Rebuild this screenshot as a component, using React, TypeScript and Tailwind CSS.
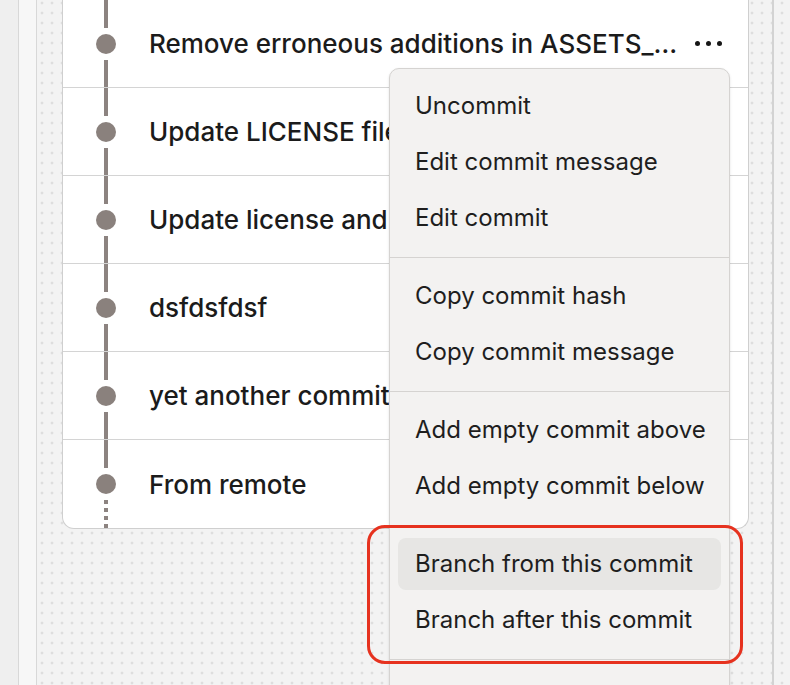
import React from 'react';

const commits = [
  'Remove erroneous additions in ASSETS_…',
  'Update LICENSE file',
  'Update license and readme',
  'dsfdsfdsf',
  'yet another commit',
  'From remote',
];

type MenuEntry = { label: string; active?: boolean } | 'sep';

const menu: MenuEntry[] = [
  { label: 'Uncommit' },
  { label: 'Edit commit message' },
  { label: 'Edit commit' },
  'sep',
  { label: 'Copy commit hash' },
  { label: 'Copy commit message' },
  'sep',
  { label: 'Add empty commit above' },
  { label: 'Add empty commit below' },
  'sep',
  { label: 'Branch from this commit', active: true },
  { label: 'Branch after this commit' },
  'sep',
];

function Timeline({ last }: { last: boolean }) {
  return (
    <div className="flex w-5 flex-col items-center">
      <div className="w-1 flex-1 bg-[#8c8380]" />
      <div className="my-[6px] h-5 w-5 shrink-0 rounded-full bg-[#8a817d]" />
      {last ? (
        // dotted tail below the oldest commit
        <div className="flex flex-1 flex-col items-center gap-1 overflow-hidden">
          {[0, 1, 2, 3, 4].map((i) => (
            <div key={i} className="h-1 w-1 shrink-0 bg-[#8c8380]" />
          ))}
        </div>
      ) : (
        <div className="w-1 flex-1 bg-[#8c8380]" />
      )}
    </div>
  );
}

export default function App() {
  return (
    <div className="relative flex h-[685px] w-[790px] overflow-hidden bg-[#f3f3f3] font-['Inter','Liberation_Sans',sans-serif]">
      {/* side strips */}
      <div className="w-[19px] shrink-0 border-r border-[#d8d8d8] bg-[#efefef]" />
      <div className="w-[18px] shrink-0 border-r border-[#d8d8d8] bg-[#f7f7f7]" />

      {/* dotted canvas */}
      <div className="flex-1 bg-[#f3f3f3] bg-[radial-gradient(circle,#dedede_1.2px,transparent_1.7px)] bg-[length:10px_10px] bg-[position:0px_-2px]">
        <div className="h-full w-[737px] border-r-2 border-[#d3d3d3] pl-[25px]">
          {/* commit card */}
          <div className="w-[687px] overflow-hidden rounded-b-xl border-x border-b border-[#cfcfcf] bg-white">
            {commits.map((c, i) => (
              <div
                key={c}
                className={`flex h-[88px] items-stretch pl-[33px] ${
                  i < commits.length - 1 ? 'border-b border-[#d4d4d4]' : ''
                }`}
              >
                <Timeline last={i === commits.length - 1} />
                <div className="ml-[33px] flex min-w-0 flex-1 items-center pr-[26px]">
                  <span className="flex-1 truncate whitespace-nowrap text-[26px] font-medium text-[#1b1b1b]">{c}</span>
                  {i === 0 && (
                    <div className="flex items-center gap-[6px] pl-3">
                      <span className="h-[5px] w-[5px] rounded-full bg-[#161616]" />
                      <span className="h-[5px] w-[5px] rounded-full bg-[#161616]" />
                      <span className="h-[5px] w-[5px] rounded-full bg-[#161616]" />
                    </div>
                  )}
                </div>
              </div>
            ))}
          </div>
        </div>
      </div>

      {/* context menu */}
      <div className="absolute left-[389px] top-[68px] flex w-[341px] flex-col gap-1 rounded-[10px] border border-[#d5d3d1] bg-[#f3f2f1] px-2 pt-[11px] pb-10 shadow-sm">
        {menu.map((m, i) =>
          m === 'sep' ? (
            <div key={i} className="-mx-2 my-[8.5px] h-px bg-[#d5d3d1]" />
          ) : (
            <div
              key={i}
              className={`flex h-[52px] items-center whitespace-nowrap rounded-lg pl-[17px] text-[24px] text-[#1e1e1e] ${
                m.active ? 'bg-[#e7e6e4]' : ''
              }`}
            >
              {m.label}
            </div>
          )
        )}
      </div>

      {/* highlight box */}
      <div className="absolute left-[367px] top-[525px] h-[139px] w-[376px] rounded-[18px] border-[3px] border-[#e6321f]" />
    </div>
  );
}
